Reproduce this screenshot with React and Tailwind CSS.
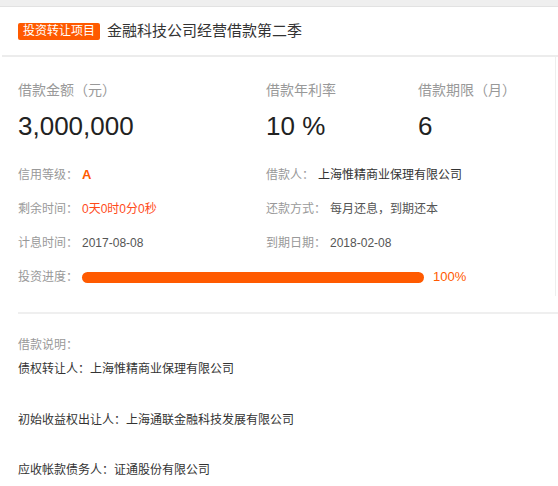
import React from "react";

const font = { fontFamily: '"Liberation Sans", "Noto Sans CJK SC", sans-serif' };

const Field = ({ label, children, valueClass = "text-[#333]" }) => (
  <div className="flex items-center h-[34px] text-[12px] leading-[20px]">
    <span className="text-[#999]">{label}</span>
    <span className={`ml-[4px] ${valueClass}`}>{children}</span>
  </div>
);

const App = () => {
  return (
    <div className="w-[558px] h-[486px] bg-white overflow-hidden" style={font}>
      {/* top strip */}
      <div className="h-[7px] bg-[#efefef] border-b border-[#e2e2e2]" />

      {/* header */}
      <div className="ml-[2px] h-[50px] flex items-center pl-[16px] border-b-2 border-[#ececec]">
        <span className="bg-[#ff5a00] text-white text-[12px] leading-[17px] px-[5px] rounded-[2px]">
          投资转让项目
        </span>
        <span className="ml-[7px] text-[15px] text-[#333] leading-[20px]">金融科技公司经营借款第二季</span>
      </div>

      {/* summary */}
      <div className="w-[556px] border-r border-[#eeeeee] pl-[18px] pb-[2px]">
        <div className="flex pt-[23px]">
          <div className="w-[248px]">
            <div className="text-[14px] leading-[20px] text-[#999]">借款金额（元）</div>
            <div className="mt-[10px] text-[26px] leading-[32px] text-[#222]">3,000,000</div>
          </div>
          <div className="w-[152px]">
            <div className="text-[14px] leading-[20px] text-[#999]">借款年利率</div>
            <div className="mt-[10px] text-[26px] leading-[32px] text-[#222]">10 %</div>
          </div>
          <div>
            <div className="text-[14px] leading-[20px] text-[#999]">借款期限（月）</div>
            <div className="mt-[10px] text-[26px] leading-[32px] text-[#222]">6</div>
          </div>
        </div>

        <div className="flex mt-[16px]">
          <div className="w-[248px]">
            <Field label="信用等级：" valueClass="text-[#ff5a00] font-bold text-[13px]">A</Field>
            <Field label="剩余时间：" valueClass="text-[#ff4a1a]">0天0时0分0秒</Field>
            <Field label="计息时间：" valueClass="text-[#555]">2017-08-08</Field>
          </div>
          <div>
            <Field label="借款人：">上海惟精商业保理有限公司</Field>
            <Field label="还款方式：" valueClass="text-[#555]">每月还息，到期还本</Field>
            <Field label="到期日期：" valueClass="text-[#555]">2018-02-08</Field>
          </div>
        </div>

        <div className="flex items-center h-[34px] text-[12px] leading-[20px]">
          <span className="text-[#999]">投资进度：</span>
          <div className="ml-[4px] w-[342px] h-[11px] rounded-full bg-[#ff5a00]" />
          <span className="ml-[9px] text-[13px] text-[#ff5a00]">100%</span>
        </div>
      </div>

      {/* description */}
      <div className="ml-[18px] mt-[16px] border-t-2 border-[#efefef]" />
      <div className="pl-[18px] pt-[21px] text-[12px] leading-[20px]">
        <div className="text-[#999]">借款说明：</div>
        <div className="mt-[4px] text-[#333]">债权转让人：上海惟精商业保理有限公司</div>
        <div className="mt-[31px] text-[#333]">初始收益权出让人：上海通联金融科技发展有限公司</div>
        <div className="mt-[30px] text-[#333]">应收帐款债务人：证通股份有限公司</div>
      </div>
    </div>
  );
};

export default App;
